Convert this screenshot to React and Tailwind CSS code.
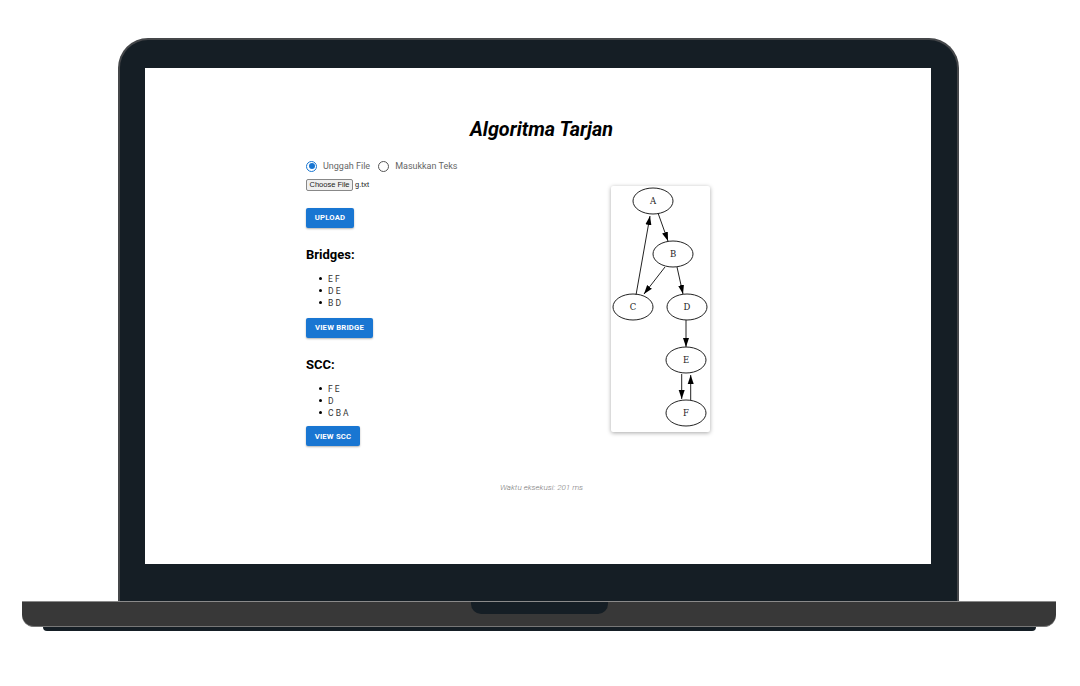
import React from 'react';

const nodes = [
  { id: 'A', cx: 42, cy: 15 },
  { id: 'B', cx: 62, cy: 68 },
  { id: 'C', cx: 22, cy: 121 },
  { id: 'D', cx: 76, cy: 121 },
  { id: 'E', cx: 75, cy: 174 },
  { id: 'F', cx: 75, cy: 227 },
];

// x1, y1, x2, y2 with x2/y2 at the arrow tip
const edges = [
  [47, 27, 57, 55],
  [54, 81, 33, 108],
  [66, 81, 72, 108],
  [25, 109, 39, 30],
  [75, 134, 75, 161],
  [70.7, 188, 70.7, 213],
  [79.7, 214, 79.7, 189],
];

function Graph() {
  return (
    <div className="w-[99px] h-[246px] mt-[45px] bg-white rounded-[2px] shadow-[0_1px_4px_rgba(0,0,0,0.35)]">
      <svg width="99" height="246" viewBox="0 0 99 246">
        <defs>
          <marker id="arrow" markerUnits="userSpaceOnUse" markerWidth="9" markerHeight="8" refX="9" refY="4" orient="auto">
            <path d="M0 1 L9 4 L0 7 Z" fill="#000" />
          </marker>
        </defs>
        {edges.map((e, i) => (
          <line key={i} x1={e[0]} y1={e[1]} x2={e[2]} y2={e[3]} stroke="#222" strokeWidth="1" markerEnd="url(#arrow)" />
        ))}
        {nodes.map((n) => (
          <g key={n.id}>
            <ellipse cx={n.cx} cy={n.cy} rx="20" ry="13" fill="none" stroke="#222" strokeWidth="1" />
            <text x={n.cx} y={n.cy + 3} textAnchor="middle" fontSize="8.5" fill="#222" fontFamily="'DejaVu Serif', serif">
              {n.id}
            </text>
          </g>
        ))}
      </svg>
    </div>
  );
}

function Radio({ checked, label }) {
  return (
    <div className="flex items-center">
      <div className={`w-[11px] h-[11px] rounded-full border flex items-center justify-center ${checked ? 'border-[#1976d2]' : 'border-[#555]'}`}>
        {checked && <div className="w-[6px] h-[6px] rounded-full bg-[#1976d2]" />}
      </div>
      <span className="ml-[6px] text-[9px] leading-[12px] text-[#666]">{label}</span>
    </div>
  );
}

function BlueButton({ children, w }) {
  return (
    <button className={`${w} h-[20px] bg-[#1976d2] text-white text-[7.7px] font-bold tracking-[0.2px] rounded-[2px] shadow-[0_1px_2px_rgba(0,0,0,0.3)]`}>
      {children}
    </button>
  );
}

function Items({ items }) {
  return (
    <ul className="pl-[13px] text-[8.5px] leading-[12px] text-[#333]">
      {items.map((t) => (
        <li key={t} className="flex items-center">
          <div className="w-[3px] h-[3px] rounded-full bg-black mr-[6px]" />
          {t}
        </li>
      ))}
    </ul>
  );
}

export default function App() {
  return (
    <div className="w-[1080px] h-[686px] bg-white overflow-hidden pt-[38px] font-['Roboto',sans-serif]">
      {/* Lid */}
      <div className="ml-[118px] w-[841px] h-[563px] bg-[#151e25] rounded-t-[30px] border-2 border-b-0 border-[#45474a] pt-[28px] pl-[25px]">
        <div className="w-[786px] h-[496px] bg-white pl-[161px] pt-[50px]">
          <div className="w-[471px]">
            <h1 className="text-center text-[19.75px] leading-[23px] font-bold italic text-black">Algoritma Tarjan</h1>
            <div className="flex">
              <div className="w-[305px] pt-[19px]">
                <div className="flex gap-[8px]">
                  <Radio checked label="Unggah File" />
                  <Radio label="Masukkan Teks" />
                </div>
                <div className="flex items-center mt-[7px] h-[11px]">
                  <div className="w-[47px] h-[12px] flex items-center justify-center bg-[#efefef] border border-[#888] rounded-[2px] text-[7.5px] text-[#222] font-['Liberation_Sans',sans-serif]">
                    Choose File
                  </div>
                  <span className="ml-[2px] text-[7.5px] text-[#222] font-['Liberation_Sans',sans-serif]">g.txt</span>
                </div>
                <div className="mt-[13px]">
                  <BlueButton w="w-[48px]">UPLOAD</BlueButton>
                </div>
                <h2 className="mt-[18px] text-[13px] leading-[18px] font-bold text-black">Bridges:</h2>
                <div className="mt-[9px]">
                  <Items items={['E F', 'D E', 'B D']} />
                </div>
                <div className="mt-[4px]">
                  <BlueButton w="w-[67px]">VIEW BRIDGE</BlueButton>
                </div>
                <h2 className="mt-[18px] text-[13px] leading-[18px] font-bold text-black">SCC:</h2>
                <div className="mt-[9px]">
                  <Items items={['F E', 'D', 'C B A']} />
                </div>
                <div className="mt-[3px]">
                  <BlueButton w="w-[54px]">VIEW SCC</BlueButton>
                </div>
              </div>
              <Graph />
            </div>
            <p className="mt-[36px] text-center text-[8.1px] leading-[10px] italic font-light text-[#777]">Waktu eksekusi: 201 ms</p>
          </div>
        </div>
      </div>
      {/* Base */}
      <div className="ml-[22px] w-[1034px] h-[26px] bg-[#383838] rounded-b-[12px] border-t border-[#8a8a8a] border-b border-b-[#777] flex justify-center">
        <div className="w-[137px] h-[12px] bg-[#151e25] rounded-b-[10px]" />
      </div>
      <div className="ml-[43px] w-[993px] h-[4px] bg-[#151e25] rounded-b-[5px]" />
    </div>
  );
}
